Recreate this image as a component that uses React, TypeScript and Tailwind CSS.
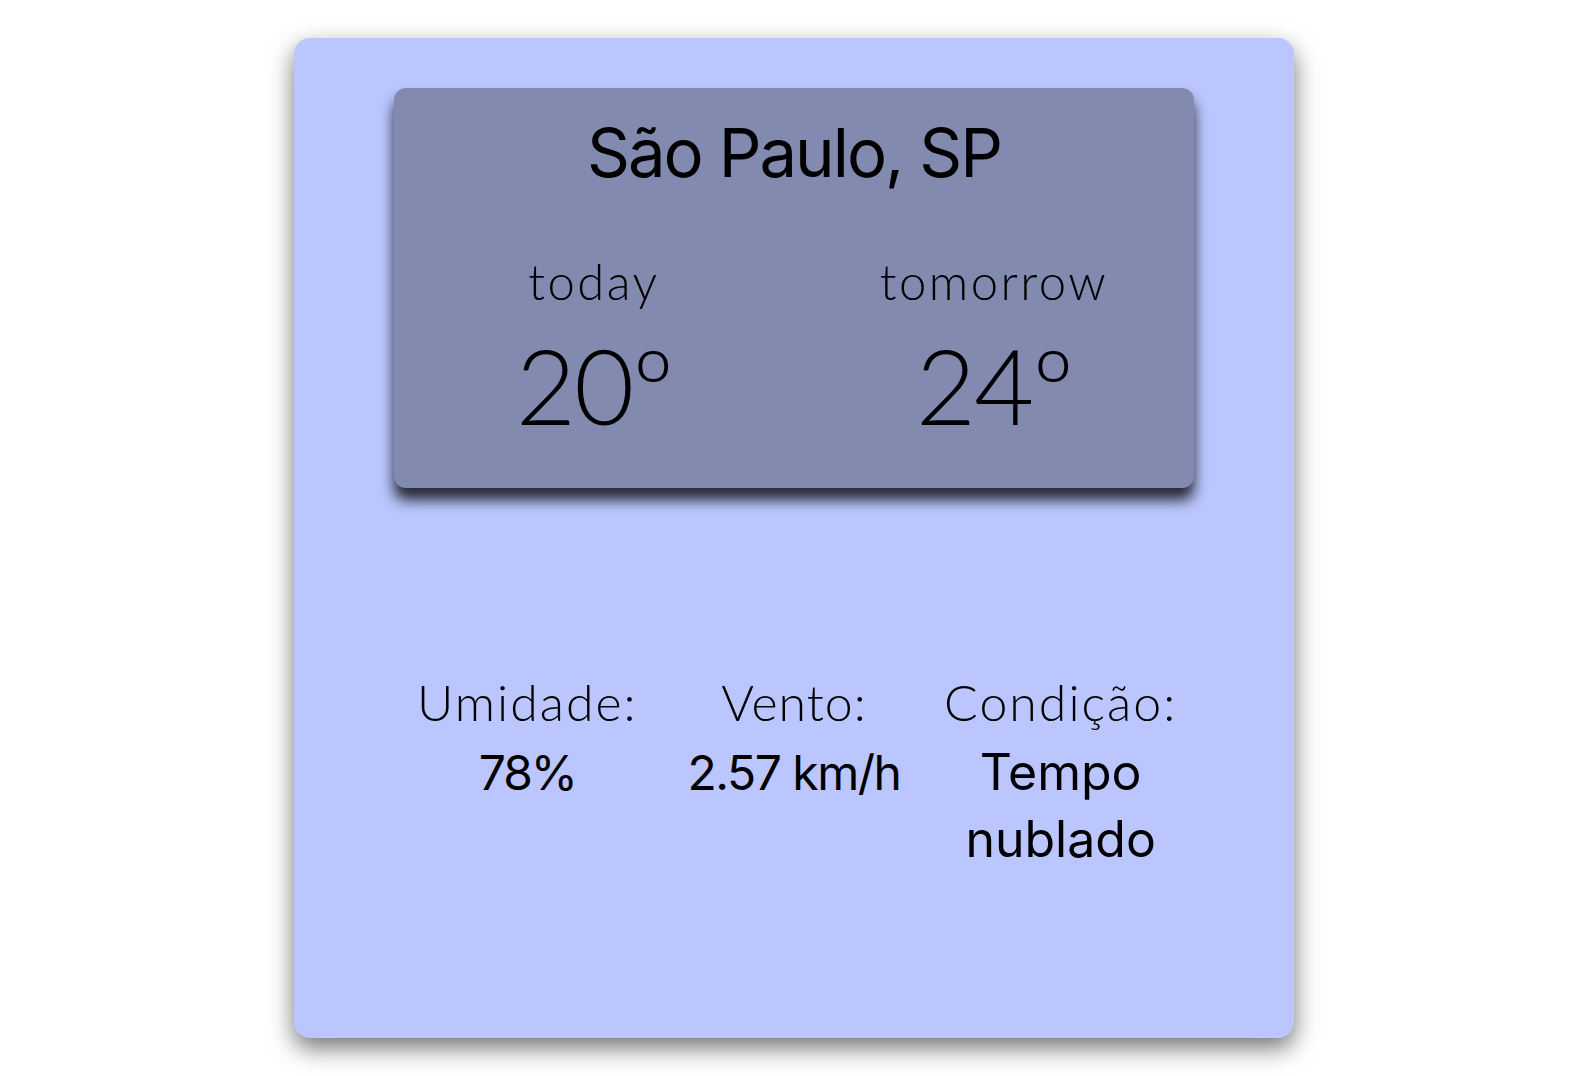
import React from "react";

const inter = { fontFamily: "Inter, 'Open Sans', sans-serif" };
const light = { fontFamily: "Lato, 'Open Sans', sans-serif" };

export default function App() {
  return (
    <div className="min-h-screen bg-white pt-[38px]" style={inter}>
      <div className="mx-auto flex h-[1000px] w-[1000px] flex-col items-center rounded-[16px] bg-[#bac6fd] shadow-[0_10px_25px_rgba(0,0,0,0.55)] text-black">
        <div className="mt-[50px] flex h-[400px] w-[800px] flex-col items-center rounded-[12px] bg-[#828ab0] pt-[25px] shadow-[0_12px_14px_rgba(0,0,0,0.8)]">
          <h1 className="text-[67px] leading-[80px] font-normal tracking-[-2px]">São Paulo, SP</h1>
          <div className="mt-[62px] grid w-full grid-cols-2">
            <div className="flex flex-col items-center" style={light}>
              <span className="text-[49px] leading-[52px] font-light tracking-[2.5px]">today</span>
              <span className="mt-[18px] text-[104px] leading-[120px] font-light tracking-[-2px]">20º</span>
            </div>
            <div className="flex flex-col items-center" style={light}>
              <span className="text-[49px] leading-[52px] font-light tracking-[2.5px]">tomorrow</span>
              <span className="mt-[18px] text-[104px] leading-[120px] font-light tracking-[-2px]">24º</span>
            </div>
          </div>
        </div>
        <div className="mt-[181px] grid w-[800px] grid-cols-3 text-center">
          <div className="flex flex-col items-center">
            <span className="text-[50px] leading-[66px] font-light tracking-[2px]" style={light}>Umidade:</span>
            <span className="mt-[4px] text-[48px] leading-[67px] font-normal tracking-[-2px]">78%</span>
          </div>
          <div className="flex flex-col items-center">
            <span className="text-[50px] leading-[66px] font-light tracking-[1px]" style={light}>Vento:</span>
            <span className="mt-[4px] text-[48px] leading-[67px] font-normal tracking-[-1.5px]">2.57 km/h</span>
          </div>
          <div className="flex flex-col items-center">
            <span className="text-[50px] leading-[66px] font-light tracking-[2px]" style={light}>Condição:</span>
            <span className="mt-[4px] text-[50px] leading-[67px] font-normal">
              Tempo
              <br />
              nublado
            </span>
          </div>
        </div>
      </div>
    </div>
  );
}
